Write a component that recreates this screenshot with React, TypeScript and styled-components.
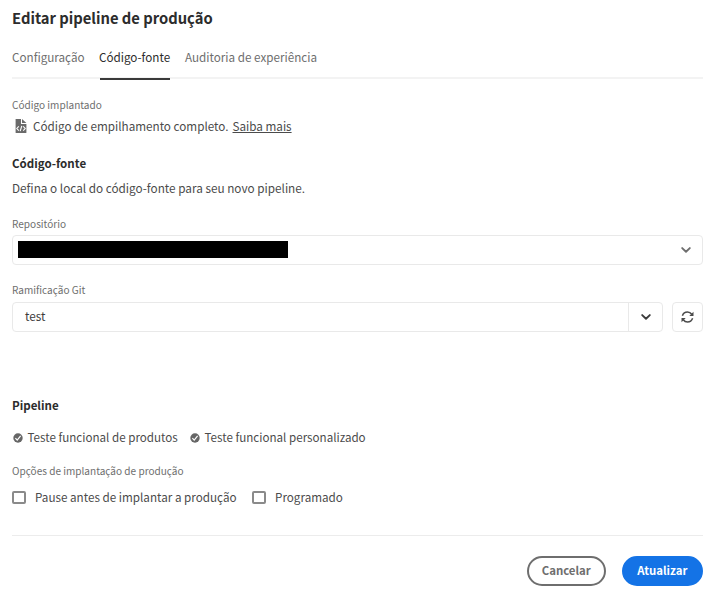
import React from 'react';
import styled, { createGlobalStyle } from 'styled-components';

const GlobalStyle = createGlobalStyle`
  * { box-sizing: border-box; }
  body {
    margin: 0;
    background: #fff;
    color: #4b4b4b;
    font-family: "Noto Sans CJK SC", "Noto Sans", sans-serif;
    font-size: 11.75px;
    line-height: 20px;
    white-space: nowrap;
  }
  button, input { font: inherit; }
`;

const Page = styled.main`
  display: flex;
  flex-direction: column;
  width: 704px;
  height: 611px;
  padding: 8px 1px 0 12px;
  overflow: hidden;
`;

const Title = styled.h1`
  margin: 0;
  color: #2c2c2c;
  font-size: 14.75px;
  font-weight: 700;
  line-height: 20px;
`;

const Tabs = styled.nav`
  display: flex;
  gap: 15px;
  height: 32px;
  margin-top: 19px;
  border-bottom: 2px solid #f3f3f3;
`;

const Tab = styled.a<{ $active?: boolean; $width: number }>`
  width: ${(p) => p.$width}px;
  height: 33px;
  color: ${(p) => (p.$active ? '#2c2c2c' : '#6e6e6e')};
  border-bottom: 2px solid ${(p) => (p.$active ? '#3a3a3a' : 'transparent')};
  font-size: 11.68px;
  text-indent: ${(p) => (p.$active ? -1 : 0)}px;
`;

const Label = styled.div<{ $top: number }>`
  height: 16px;
  margin-top: ${(p) => p.$top}px;
  color: #6e6e6e;
  font-size: 10.05px;
  line-height: 16px;
`;

const Deployed = styled.div`
  display: flex;
  align-items: center;
  height: 20px;
  margin-top: 3px;
  padding-left: 3px;
  font-size: 11.7px;

  svg { margin-right: 6px; }
`;

const Link = styled.a`
  margin-left: 4px;
  text-decoration: underline;
  text-underline-offset: 1px;
  text-decoration-thickness: 1px;
`;

const Heading = styled.h2<{ $top: number }>`
  height: 20px;
  margin: ${(p) => p.$top}px 0 0;
  color: #2c2c2c;
  font-size: 11.55px;
  font-weight: 700;
`;

const Copy = styled.p`
  height: 20px;
  margin: 5px 0 0;
`;

const Picker = styled.div`
  display: flex;
  align-items: center;
  justify-content: space-between;
  height: 30px;
  margin-top: 3px;
  padding: 0 11px 0 5px;
  border: 1px solid #e9e9e9;
  border-radius: 4px;
`;

const Redacted = styled.span`
  width: 270px;
  height: 17px;
  margin-bottom: 1px;
  background: #000;
`;

const BranchRow = styled.div`
  display: flex;
  gap: 9px;
  height: 30px;
  margin-top: 4px;
`;

const Combo = styled.div`
  display: flex;
  flex: 1;
  border: 1px solid #e9e9e9;
  border-radius: 4px;
`;

const Value = styled.span`
  flex: 1;
  padding-left: 12px;
  line-height: 25px;
  color: #3c3c3c;
`;

const ComboToggle = styled.span`
  display: flex;
  align-items: center;
  justify-content: center;
  width: 34px;
  border-left: 1px solid #e9e9e9;
`;

const IconButton = styled.button`
  display: flex;
  align-items: center;
  justify-content: center;
  width: 31px;
  padding: 0;
  background: #fff;
  border: 1px solid #e9e9e9;
  border-radius: 4px;
`;

const Checks = styled.div`
  display: flex;
  height: 20px;
  margin-top: 12px;
  padding-left: 1px;
  font-size: 11.62px;
`;

const Check = styled.div<{ $width: number }>`
  display: flex;
  align-items: center;
  gap: 4.5px;
  width: ${(p) => p.$width}px;

  svg { margin-top: 2px; }
`;

const Options = styled.div`
  display: flex;
  height: 20px;
  margin-top: 8px;
  font-size: 11.68px;
`;

const Option = styled.label<{ $width: number }>`
  display: flex;
  align-items: center;
  gap: 9px;
  width: ${(p) => p.$width}px;
`;

const Box = styled.span`
  width: 14px;
  height: 13px;
  border: 2px solid #8a8a8a;
  border-radius: 2px;
`;

const Footer = styled.footer`
  display: flex;
  justify-content: flex-end;
  gap: 15.5px;
  margin-top: 28px;
  padding-top: 20px;
  border-top: 1px solid #ececec;
`;

const Button = styled.button<{ $primary?: boolean }>`
  width: ${(p) => (p.$primary ? 81.5 : 79.5)}px;
  height: 30px;
  padding: 0 0 2px;
  border: 2px solid ${(p) => (p.$primary ? '#1473e6' : '#6e6e6e')};
  border-radius: 15px;
  background: ${(p) => (p.$primary ? '#1473e6' : '#fff')};
  color: ${(p) => (p.$primary ? '#fff' : '#6e6e6e')};
  font-size: 11.4px;
  font-weight: 700;
  line-height: 22px;
`;

const Chevron = ({ color }: { color: string }) => (
  <svg width="10" height="6" viewBox="0 0 10 6" fill="none" stroke={color} strokeWidth="1.9" strokeLinecap="round" strokeLinejoin="round">
    <path d="M1.2 1.1 5 4.7l3.8-3.6" />
  </svg>
);

const FileCode = () => (
  <svg width="12" height="14" viewBox="0 0 12 14">
    <path fill="#6a6a6a" d="M.6 0H6v5h5.4v8.5q0 .5-.5.5H1.1q-.5 0-.5-.5ZM7 0l4.4 4H7Z" />
    <path fill="none" stroke="#fff" strokeWidth="1.1" d="M3.8 7.3 1.8 9.5l2 2.2M8.2 7.3l2 2.2-2 2.2M6.8 6.8 5.2 12.2" />
  </svg>
);

const CheckCircle = () => (
  <svg width="10" height="10" viewBox="0 0 10 10">
    <circle cx="5" cy="5" r="4.7" fill="#666" />
    <path fill="none" stroke="#fff" strokeWidth="1.2" d="m2.4 5.2 1.8 1.9 3.4-4.2" />
  </svg>
);

const Refresh = () => (
  <svg width="13" height="12" viewBox="0 0 13 12">
    <g fill="none" stroke="#4b4b4b" strokeWidth="1.5">
      <path d="M1.4 4.7C2.2 2.4 4.1 1 6.5 1c1.8 0 3.2.8 4.2 2.2" />
      <path d="M11.6 7.3C10.8 9.6 8.9 11 6.5 11c-1.8 0-3.2-.8-4.2-2.2" />
    </g>
    <path fill="#4b4b4b" d="M12.5.8V5H8.3ZM.5 11.2V7h4.2Z" />
  </svg>
);

export default function App() {
  return (
    <>
      <GlobalStyle />
      <Page>
        <Title>Editar pipeline de produção</Title>
        <Tabs>
          <Tab $width={73}>Configuração</Tab>
          <Tab $active $width={70}>Código-fonte</Tab>
          <Tab $width={133}>Auditoria de experiência</Tab>
        </Tabs>

        <Label $top={18}>Código implantado</Label>
        <Deployed>
          <FileCode />
          Código de empilhamento completo. <Link>Saiba mais</Link>
        </Deployed>

        <Heading $top={17}>Código-fonte</Heading>
        <Copy>Defina o local do código-fonte para seu novo pipeline.</Copy>

        <Label $top={18}>Repositório</Label>
        <Picker>
          <Redacted />
          <Chevron color="#6e6e6e" />
        </Picker>

        <Label $top={17}>Ramificação Git</Label>
        <BranchRow>
          <Combo>
            <Value>test</Value>
            <ComboToggle><Chevron color="#3c3c3c" /></ComboToggle>
          </Combo>
          <IconButton aria-label="Atualizar ramificações"><Refresh /></IconButton>
        </BranchRow>

        <Heading $top={63}>Pipeline</Heading>
        <Checks>
          <Check $width={177}><CheckCircle />Teste funcional de produtos</Check>
          <Check $width={177}><CheckCircle />Teste funcional personalizado</Check>
        </Checks>

        <Label $top={16}>Opções de implantação de produção</Label>
        <Options>
          <Option $width={240}><Box />Pause antes de implantar a produção</Option>
          <Option $width={92}><Box />Programado</Option>
        </Options>

        <Footer>
          <Button>Cancelar</Button>
          <Button $primary>Atualizar</Button>
        </Footer>
      </Page>
    </>
  );
}
